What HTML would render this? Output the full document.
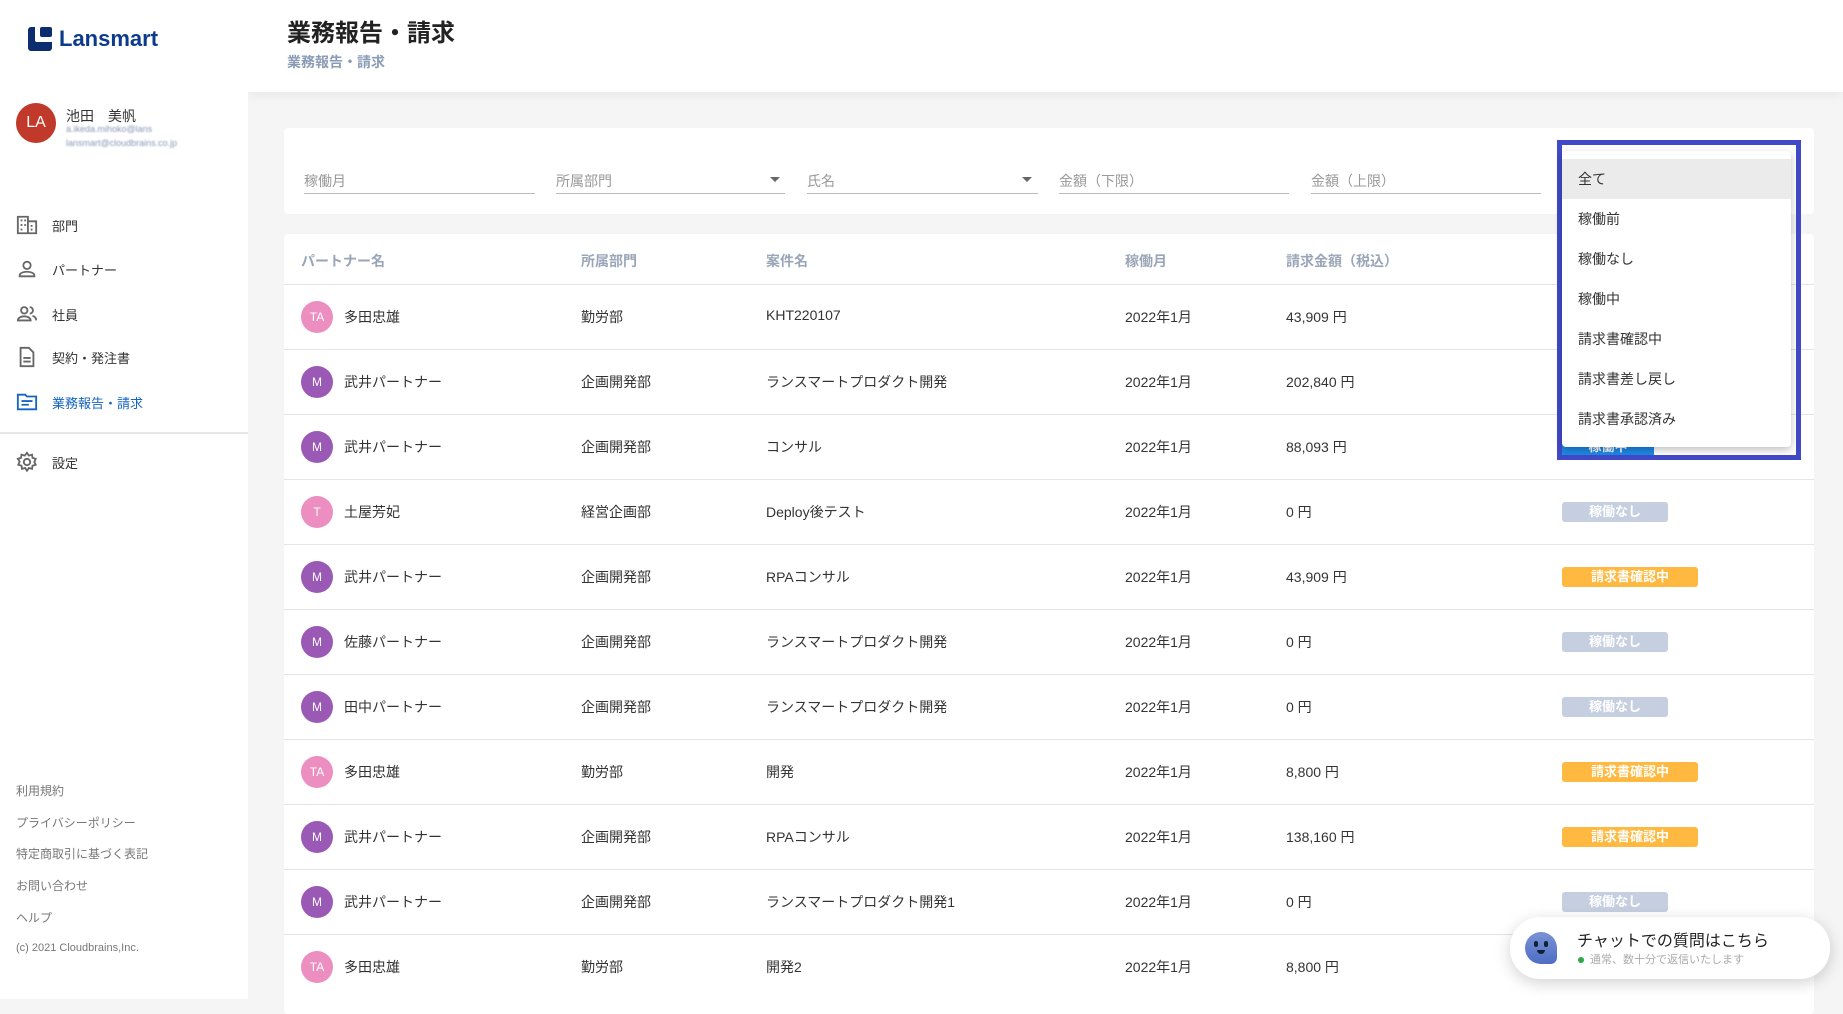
<!DOCTYPE html>
<html><head><meta charset="utf-8"><style>
*{box-sizing:border-box;margin:0;padding:0}
body{width:1843px;height:999px;overflow:hidden;background:#f5f5f5;font-family:"Liberation Sans","Noto Sans CJK JP",sans-serif;color:#333;position:relative}
.side{position:absolute;left:0;top:0;width:248px;height:999px;background:#fff;z-index:2}
.hdr{position:absolute;left:248px;top:0;right:0;height:92px;background:#fff;box-shadow:0 4px 10px rgba(0,0,0,.05)}
.abs{position:absolute;white-space:nowrap}
.nav{position:absolute;left:16px;font-size:13px;color:#333;display:flex;align-items:center}
.nav svg{width:22px;height:22px;margin-right:14px}
.foot{position:absolute;left:16px;font-size:12px;color:#777}
.card{position:absolute;background:#fff;border-radius:4px}
.fld{position:absolute;top:193px;height:1px;background:#bbb}
.flbl{position:absolute;top:171px;font-size:14px;color:#999}
.tri{position:absolute;top:177px;border-left:5px solid transparent;border-right:5px solid transparent;border-top:5px solid #666}
.row{position:absolute;left:284px;width:1530px;height:65px;border-top:1px solid #e4e4e4;font-size:14px;color:#333}
.row span{position:absolute;top:22px;white-space:nowrap}
.av{position:absolute;left:17px;top:16px;width:32px;height:32px;border-radius:50%;color:#fff;font-size:12px;text-align:center;line-height:32px}
.b{position:absolute;left:1278px;top:22px;height:20px;border-radius:3px;color:#fff;font-weight:bold;font-size:13px;text-align:center;line-height:20px}
.g{background:#c5cfe0;width:106px}.o{background:#ffb840;width:136px}
.mi{height:40px;line-height:40px;padding-left:16px;font-size:14px;color:#333}
</style></head><body>
<div class="side">
 <div class="abs" style="left:28px;top:26px;display:flex;align-items:center">
  <div style="width:24px;height:24px;background:#0d2e6e;border-radius:3px;position:relative"><div style="position:absolute;left:7px;top:0;width:17px;height:15px;background:#fff;border-radius:0 0 0 2px"></div><div style="position:absolute;left:12px;top:0;width:12px;height:10px;background:#0d2e6e;border-radius:2px"></div></div>
  <span style="font-size:22px;font-weight:bold;color:#0d3b8c;margin-left:7px">Lansmart</span>
 </div>
 <div class="abs" style="left:16px;top:103px;width:40px;height:40px;border-radius:50%;background:#c0392b;color:#fff;font-size:16px;text-align:center;line-height:40px">LA</div>
 <div class="abs" style="left:66px;top:106px;font-size:14px">池田　美帆</div>
 <div class="abs" style="left:66px;top:124px;font-size:9px;color:#8a97b8;filter:blur(0.8px)">a.ikeda.mihoko@lans</div>
 <div class="abs" style="left:66px;top:138px;font-size:9px;color:#8a97b8;filter:blur(0.8px)">lansmart@cloudbrains.co.jp</div>
 <div class="nav" style="top:214px"><svg viewBox="0 0 24 24" fill="#666"><path d="M2 3h11v18H2zM13 8h9v13h-9z" fill="none" stroke="#666" stroke-width="2"/><rect x="5" y="6" width="2" height="2"/><rect x="9" y="6" width="2" height="2"/><rect x="5" y="11" width="2" height="2"/><rect x="9" y="11" width="2" height="2"/><rect x="5" y="16" width="2" height="2"/><rect x="16" y="12" width="2" height="2"/><rect x="16" y="16" width="2" height="2"/></svg>部門</div>
 <div class="nav" style="top:258px"><svg viewBox="0 0 24 24" fill="none" stroke="#666" stroke-width="2"><circle cx="12" cy="8" r="4"/><path d="M4 20v-1c0-3 5-4 8-4s8 1 8 4v1z"/></svg>パートナー</div>
 <div class="nav" style="top:303px"><svg viewBox="0 0 24 24" fill="none" stroke="#666" stroke-width="2"><circle cx="9" cy="8" r="3.5"/><path d="M2 19c0-3 4-4.5 7-4.5s7 1.5 7 4.5z"/><path d="M15 4.5a3.5 3.5 0 010 7M18 14c2 .5 4 2 4 5"/></svg>社員</div>
 <div class="nav" style="top:346px"><svg viewBox="0 0 24 24" fill="none" stroke="#666" stroke-width="2"><path d="M5 2h9l5 5v15H5z"/><path d="M8 13h8M8 17h8"/></svg>契約・発注書</div>
 <div class="nav" style="top:391px;color:#1565c0"><svg viewBox="0 0 24 24" fill="none" stroke="#1565c0" stroke-width="2"><path d="M2 4h8l2 2h10v14H2z"/><path d="M6 11h12M6 15h8"/></svg>業務報告・請求</div>
 <div class="abs" style="left:0;top:432px;width:248px;height:2px;background:#e8e8e8"></div>
 <div class="nav" style="top:451px"><svg viewBox="0 0 24 24" fill="none" stroke="#666" stroke-width="2"><circle cx="12" cy="12" r="3.5"/><path d="M12 2l2 3 3.5-1 .5 3.5 3.5 1-1.5 3.5 1.5 3-3.5 1-.5 3.5-3.5-1-2 3-2-3-3.5 1-.5-3.5-3.5-1 1.5-3.5L2 8.5l3.5-1L6 4l3.5 1z"/></svg>設定</div>
 <div class="foot" style="top:782px">利用規約</div>
 <div class="foot" style="top:814px">プライバシーポリシー</div>
 <div class="foot" style="top:845px">特定商取引に基づく表記</div>
 <div class="foot" style="top:877px">お問い合わせ</div>
 <div class="foot" style="top:909px">ヘルプ</div>
 <div class="foot" style="top:942px;font-size:11px">(c) 2021 Cloudbrains,Inc.</div>
</div>
<div class="hdr">
 <div class="abs" style="left:39px;top:13px;font-size:24px;font-weight:bold;color:#222">業務報告・請求</div>
 <div class="abs" style="left:39px;top:52px;font-size:14px;font-weight:bold;color:#8a9bb5">業務報告・請求</div>
</div>
<div class="card" style="left:284px;top:128px;width:1530px;height:86px"></div>
<div class="flbl" style="left:304px">稼働月</div><div class="fld" style="left:304px;width:231px"></div>
<div class="flbl" style="left:556px">所属部門</div><div class="fld" style="left:556px;width:229px"></div><div class="tri" style="left:770px"></div>
<div class="flbl" style="left:807px">氏名</div><div class="fld" style="left:807px;width:231px"></div><div class="tri" style="left:1022px"></div>
<div class="flbl" style="left:1059px">金額（下限）</div><div class="fld" style="left:1059px;width:230px"></div>
<div class="flbl" style="left:1311px">金額（上限）</div><div class="fld" style="left:1311px;width:230px"></div>
<div class="card" style="left:284px;top:234px;width:1530px;height:780px"></div>
<div class="abs" style="top:251px;left:301px;font-size:14px;font-weight:bold;color:#9aa6b8">パートナー名</div>
<div class="abs" style="top:251px;left:581px;font-size:14px;font-weight:bold;color:#9aa6b8">所属部門</div>
<div class="abs" style="top:251px;left:766px;font-size:14px;font-weight:bold;color:#9aa6b8">案件名</div>
<div class="abs" style="top:251px;left:1125px;font-size:14px;font-weight:bold;color:#9aa6b8">稼働月</div>
<div class="abs" style="top:251px;left:1286px;font-size:14px;font-weight:bold;color:#9aa6b8">請求金額（税込）</div>

<div class="row" style="top:284px"><div class="av" style="background:#ec8fc0">TA</div><span style="left:60px">多田忠雄</span><span style="left:297px">勤労部</span><span style="left:482px">KHT220107</span><span style="left:841px">2022年1月</span><span style="left:1002px">43,909 円</span></div>
<div class="row" style="top:349px"><div class="av" style="background:#9b59b6">M</div><span style="left:60px">武井パートナー</span><span style="left:297px">企画開発部</span><span style="left:482px">ランスマートプロダクト開発</span><span style="left:841px">2022年1月</span><span style="left:1002px">202,840 円</span></div>
<div class="row" style="top:414px"><div class="av" style="background:#9b59b6">M</div><span style="left:60px">武井パートナー</span><span style="left:297px">企画開発部</span><span style="left:482px">コンサル</span><span style="left:841px">2022年1月</span><span style="left:1002px">88,093 円</span><div class="b" style="background:#1e88e5;width:92px">稼働中</div></div>
<div class="row" style="top:479px"><div class="av" style="background:#ec8fc0">T</div><span style="left:60px">土屋芳妃</span><span style="left:297px">経営企画部</span><span style="left:482px">Deploy後テスト</span><span style="left:841px">2022年1月</span><span style="left:1002px">0 円</span><div class="b g">稼働なし</div></div>
<div class="row" style="top:544px"><div class="av" style="background:#9b59b6">M</div><span style="left:60px">武井パートナー</span><span style="left:297px">企画開発部</span><span style="left:482px">RPAコンサル</span><span style="left:841px">2022年1月</span><span style="left:1002px">43,909 円</span><div class="b o">請求書確認中</div></div>
<div class="row" style="top:609px"><div class="av" style="background:#9b59b6">M</div><span style="left:60px">佐藤パートナー</span><span style="left:297px">企画開発部</span><span style="left:482px">ランスマートプロダクト開発</span><span style="left:841px">2022年1月</span><span style="left:1002px">0 円</span><div class="b g">稼働なし</div></div>
<div class="row" style="top:674px"><div class="av" style="background:#9b59b6">M</div><span style="left:60px">田中パートナー</span><span style="left:297px">企画開発部</span><span style="left:482px">ランスマートプロダクト開発</span><span style="left:841px">2022年1月</span><span style="left:1002px">0 円</span><div class="b g">稼働なし</div></div>
<div class="row" style="top:739px"><div class="av" style="background:#ec8fc0">TA</div><span style="left:60px">多田忠雄</span><span style="left:297px">勤労部</span><span style="left:482px">開発</span><span style="left:841px">2022年1月</span><span style="left:1002px">8,800 円</span><div class="b o">請求書確認中</div></div>
<div class="row" style="top:804px"><div class="av" style="background:#9b59b6">M</div><span style="left:60px">武井パートナー</span><span style="left:297px">企画開発部</span><span style="left:482px">RPAコンサル</span><span style="left:841px">2022年1月</span><span style="left:1002px">138,160 円</span><div class="b o">請求書確認中</div></div>
<div class="row" style="top:869px"><div class="av" style="background:#9b59b6">M</div><span style="left:60px">武井パートナー</span><span style="left:297px">企画開発部</span><span style="left:482px">ランスマートプロダクト開発1</span><span style="left:841px">2022年1月</span><span style="left:1002px">0 円</span><div class="b g">稼働なし</div></div>
<div class="row" style="top:934px"><div class="av" style="background:#ec8fc0">TA</div><span style="left:60px">多田忠雄</span><span style="left:297px">勤労部</span><span style="left:482px">開発2</span><span style="left:841px">2022年1月</span><span style="left:1002px">8,800 円</span></div>

<div class="abs" style="left:1557px;top:140px;width:244px;height:320px;border:5px solid #4049c8"></div>
<div class="abs" style="left:1562px;top:151px;width:229px;height:296px;background:#fff;border-radius:4px;box-shadow:0 3px 8px rgba(0,0,0,.25);padding-top:8px">
 <div class="mi" style="background:#ebebeb">全て</div><div class="mi">稼働前</div><div class="mi">稼働なし</div><div class="mi">稼働中</div><div class="mi">請求書確認中</div><div class="mi">請求書差し戻し</div><div class="mi">請求書承認済み</div>
</div>

<div class="abs" style="left:1510px;top:917px;width:320px;height:62px;background:#fff;border-radius:30px;box-shadow:0 4px 16px rgba(0,0,0,.18)">
 <div class="abs" style="left:15px;top:15px;width:32px;height:32px;border-radius:50% 50% 20% 50%;background:linear-gradient(#7a92d6,#4d6ec4)"><div class="abs" style="left:9px;top:9px;width:4px;height:6px;background:#123;border-radius:2px"></div><div class="abs" style="left:19px;top:9px;width:4px;height:6px;background:#123;border-radius:2px"></div><div class="abs" style="left:12px;top:18px;width:8px;height:4px;background:#123;border-radius:0 0 4px 4px"></div></div>
 <div class="abs" style="left:67px;top:10px;font-size:16px;color:#222">チャットでの質問はこちら</div>
 <div class="abs" style="left:68px;top:34px;font-size:11px;color:#aaa"><span style="display:inline-block;width:6px;height:6px;border-radius:50%;background:#2aa84a;margin-right:6px"></span>通常、数十分で返信いたします</div>
</div>
</body></html>
